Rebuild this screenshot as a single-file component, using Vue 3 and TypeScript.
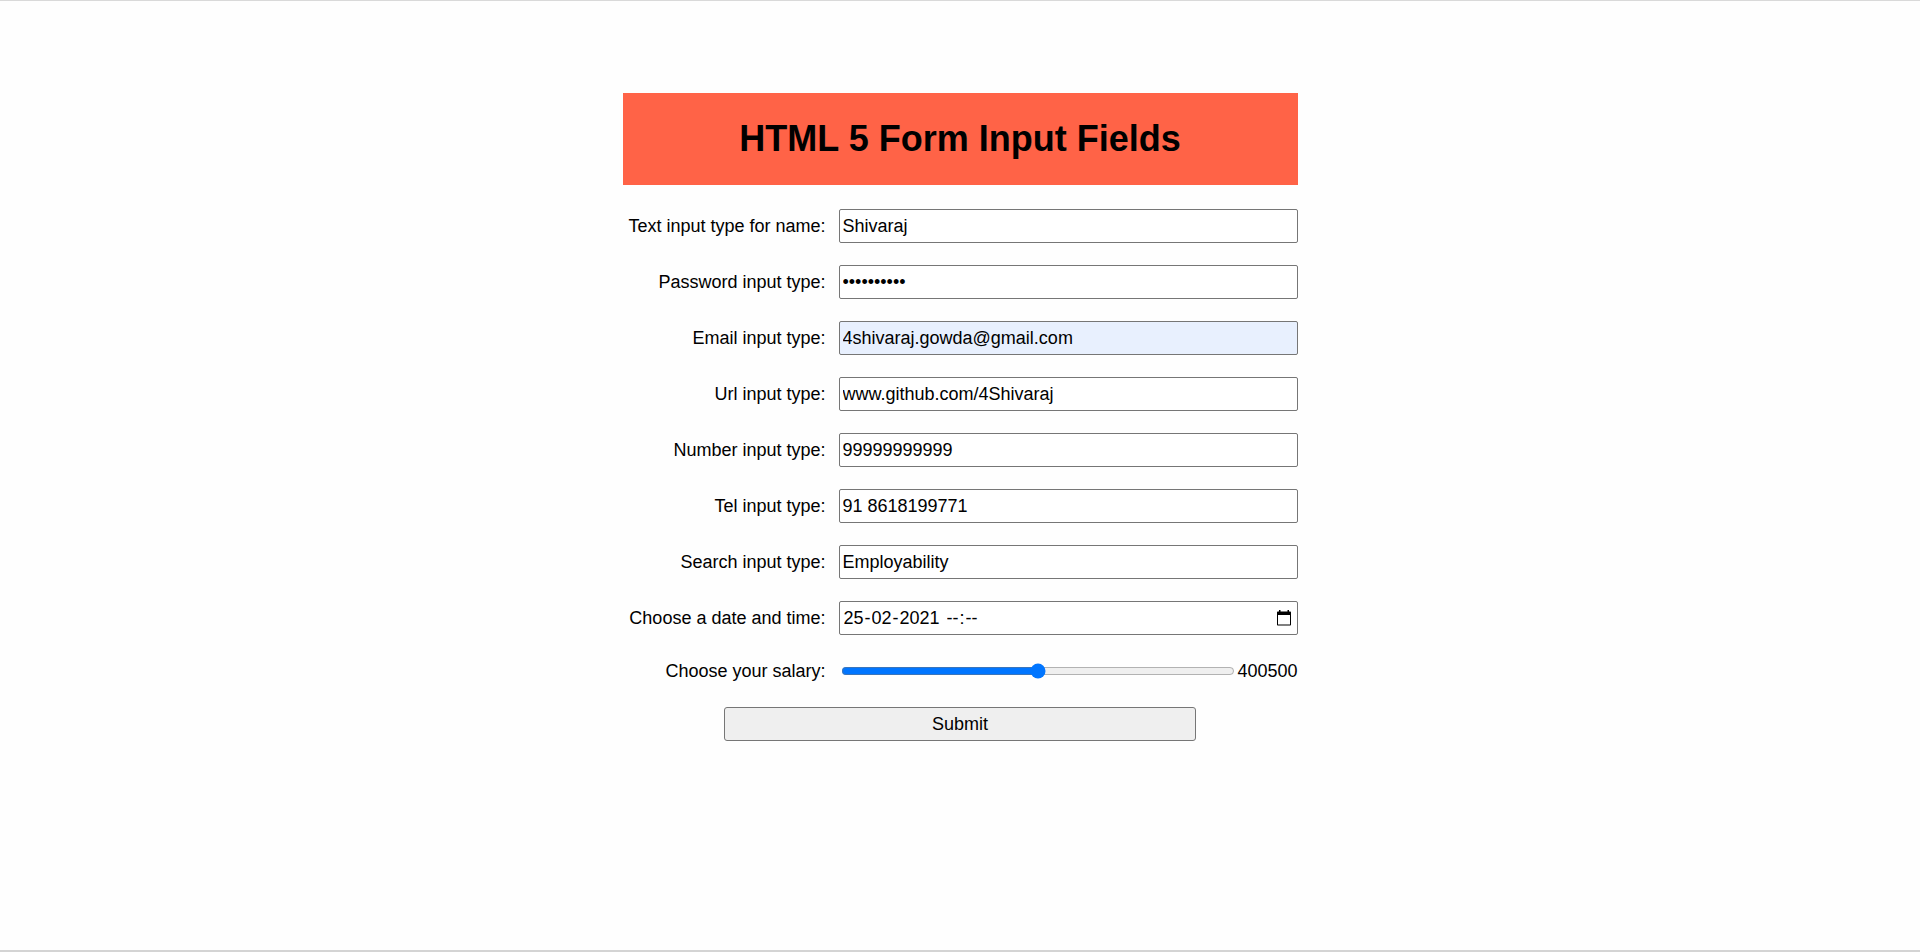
<script setup lang="ts">
import { reactive, ref } from 'vue'

interface Field {
  id: string
  label: string
  type: string
  value: string
  filled?: boolean
}

interface DatePart {
  name: string
  value: string
  size: 'pair' | 'year' | 'blank'
  separator: string
}

const fields = reactive<Field[]>([
  { id: 'name', label: 'Text input type for name:', type: 'text', value: 'Shivaraj' },
  { id: 'password', label: 'Password input type:', type: 'password', value: 'abcdefghij' },
  { id: 'email', label: 'Email input type:', type: 'email', value: '4shivaraj.gowda@gmail.com', filled: true },
  { id: 'url', label: 'Url input type:', type: 'url', value: 'www.github.com/4Shivaraj' },
  { id: 'number', label: 'Number input type:', type: 'number', value: '99999999999' },
  { id: 'tel', label: 'Tel input type:', type: 'tel', value: '91 8618199771' },
  { id: 'search', label: 'Search input type:', type: 'search', value: 'Employability' },
])

const dateParts = reactive<DatePart[]>([
  { name: 'day', value: '25', size: 'pair', separator: '-' },
  { name: 'month', value: '02', size: 'pair', separator: '-' },
  { name: 'year', value: '2021', size: 'year', separator: ' ' },
  { name: 'hours', value: '--', size: 'blank', separator: ':' },
  { name: 'minutes', value: '--', size: 'blank', separator: '' },
])

const salary = ref<number>(400500)
</script>

<template>
  <main class="page">
    <form class="form" novalidate @submit.prevent>
      <h1 class="title">HTML 5 Form Input Fields</h1>

      <div class="rows">
        <div v-for="field in fields" :key="field.id" class="row">
          <label class="label" :for="field.id">{{ field.label }}</label>
          <input
            :id="field.id"
            v-model="field.value"
            class="box"
            :class="{ filled: field.filled }"
            :type="field.type"
            autocomplete="off"
            spellcheck="false"
          />
        </div>

        <div class="row">
          <label class="label" for="day">Choose a date and time:</label>
          <div class="box date" role="group" aria-label="Date and time">
            <template v-for="part in dateParts" :key="part.name">
              <input
                :id="part.name"
                v-model="part.value"
                class="part"
                :class="part.size"
                type="text"
                :aria-label="part.name"
              />
              <span class="separator">{{ part.separator }}</span>
            </template>
            <button class="picker" type="button" aria-label="Show date picker">
              <svg width="16" height="18" viewBox="0 0 16 18" aria-hidden="true">
                <path
                  d="M14 2.500h-1V1h-1.500v1.500h-7V1H3v1.500H2C1.400 2.500 1 2.900 1 3.500v12c0 .6.400 1 1 1h12c.6 0 1-.4 1-1v-12c0-.6-.4-1-1-1zm0 13H2V6h12z"
                />
              </svg>
            </button>
          </div>
        </div>

        <div class="row slider-row">
          <label class="label" for="salary">Choose your salary:</label>
          <div class="slider">
            <input id="salary" v-model.number="salary" class="range" type="range" min="1000" max="800000" step="500" />
            <output for="salary">{{ salary }}</output>
          </div>
        </div>

        <button class="submit" type="submit">Submit</button>
      </div>
    </form>
  </main>
</template>

<style>
body {
  margin: 0;
  background: #fff;
}
</style>

<style scoped>
.page {
  box-sizing: border-box;
  min-height: 100vh;
  padding: 92px 16px 0;
  border-top: 1px solid #d9d9d9;
  border-bottom: 2px solid #d4d4d4;
  background: #fefefe;
  color: #000;
  font: 18px/20px "Liberation Sans", Arial, sans-serif;
}

.form {
  max-width: 675px;
  margin: 0 auto;
}

.title {
  margin: 0 0 24px;
  padding: 24px 0;
  background: #ff6347;
  font-size: 36px;
  line-height: 44px;
  text-align: center;
}

.rows {
  display: flex;
  flex-direction: column;
  gap: 22px;
}

.row {
  display: grid;
  grid-template-columns: 203px minmax(0, 1fr);
  column-gap: 13px;
  align-items: center;
}

.label {
  text-align: right;
}

.box {
  box-sizing: border-box;
  width: 100%;
  height: 34px;
  margin: 0;
  padding: 0 3px;
  border: 1px solid #767676;
  border-radius: 2px;
  background: #fff;
  color: #000;
  font: inherit;
  appearance: none;
}

.box.filled {
  background: #e8f0fe;
}

.box[type="number"] {
  appearance: textfield;
}

.date {
  display: flex;
  align-items: center;
}

.part {
  box-sizing: border-box;
  height: 20px;
  padding: 0 1px;
  border: 0;
  background: none;
  color: inherit;
  font: inherit;
}

.pair {
  width: 22px;
}

.year {
  width: 42px;
}

.blank {
  width: 14px;
}

.separator {
  white-space: pre;
}

.picker {
  display: flex;
  margin: 0 2px 0 auto;
  padding: 0;
  border: 0;
  background: none;
}

.slider-row {
  height: 28px;
}

.slider {
  display: flex;
  align-items: center;
  gap: 2px;
}

.range {
  flex: 1;
  min-width: 0;
  margin: 0 0 0 2px;
}

.submit {
  align-self: center;
  box-sizing: border-box;
  width: 70%;
  height: 34px;
  padding: 0;
  border: 1px solid #767676;
  border-radius: 3px;
  background: #efefef;
  color: #000;
  font: inherit;
}
</style>
